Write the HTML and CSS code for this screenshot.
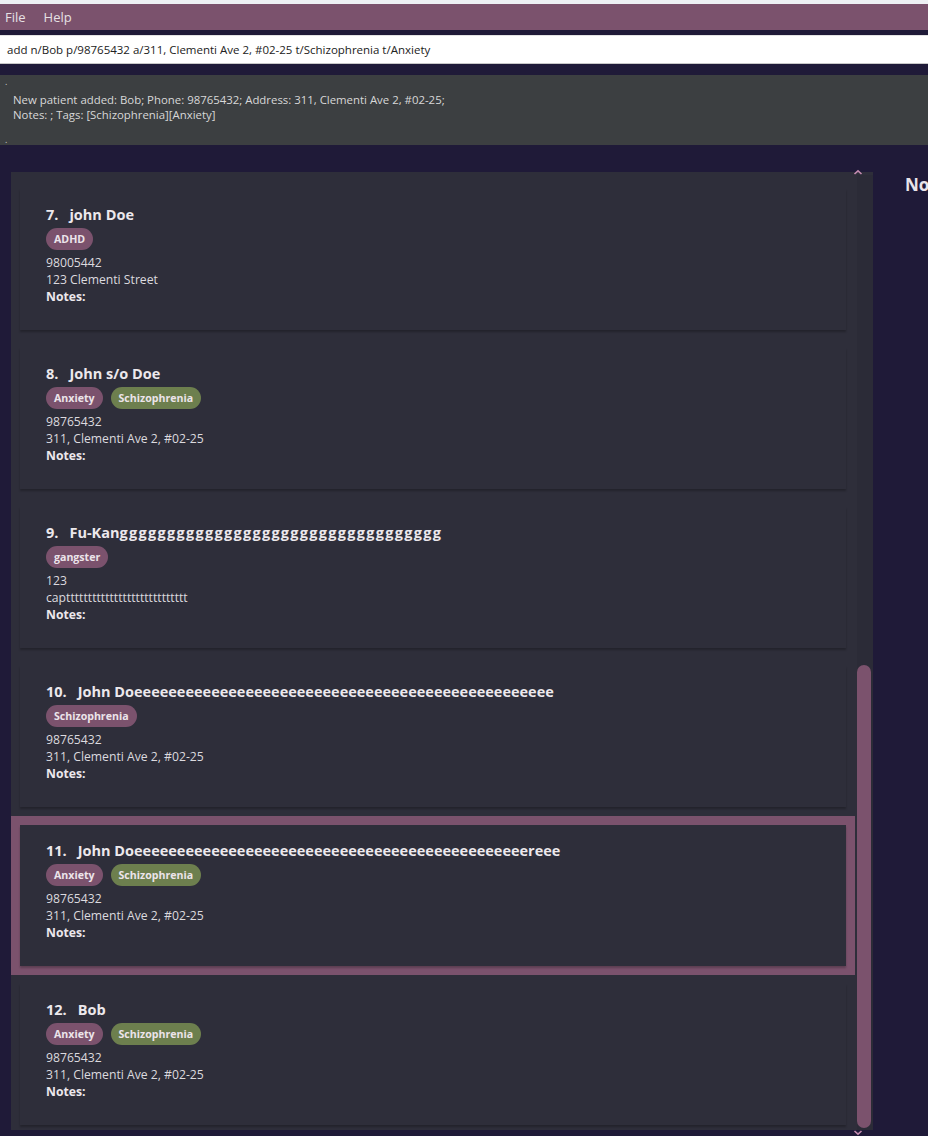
FILE: index.html
```html
<!DOCTYPE html>
<html>
<head>
<meta charset="utf-8">
<link rel="stylesheet" href="styles.css">
</head>
<body>
<div class="top-strip"></div>
<div class="menubar"><span class="menu-item">File</span><span class="menu-item">Help</span></div>
<div class="command-wrap">
  <div class="command">add n/Bob p/98765432 a/311, Clementi Ave 2, #02-25 t/Schizophrenia t/Anxiety</div>
</div>
<div class="result">
  <div class="dot">.</div>
  <div class="result-text">New patient added: Bob; Phone: 98765432; Address: 311, Clementi Ave 2, #02-25;<br>Notes: ; Tags: [Schizophrenia][Anxiety]</div>
  <div class="dot">.</div>
</div>
<div class="main">
  <div class="list-panel">
    <div class="list">
      <div class="cell">
        <div class="card">
          <div class="name"><span class="idx">7.</span>john Doe</div>
          <div class="tags"><span class="tag">ADHD</span></div>
          <div class="line">98005442</div>
          <div class="line">123 Clementi Street</div>
          <div class="line notes">Notes:</div>
        </div>
      </div>
      <div class="cell">
        <div class="card">
          <div class="name"><span class="idx">8.</span>John s/o Doe</div>
          <div class="tags"><span class="tag">Anxiety</span><span class="tag green">Schizophrenia</span></div>
          <div class="line">98765432</div>
          <div class="line">311, Clementi Ave 2, #02-25</div>
          <div class="line notes">Notes:</div>
        </div>
      </div>
      <div class="cell">
        <div class="card">
          <div class="name"><span class="idx">9.</span>Fu-Kan<span class="wide">gggggggggggggggggggggggggggggggggg</span></div>
          <div class="tags"><span class="tag">gangster</span></div>
          <div class="line">123</div>
          <div class="line">captttttttttttttttttttttttttttt</div>
          <div class="line notes">Notes:</div>
        </div>
      </div>
      <div class="cell">
        <div class="card">
          <div class="name"><span class="idx">10.</span>John Doeeeeeeeeeeeeeeeeeeeeeeeeeeeeeeeeeeeeeeeeeeeeeeeee</div>
          <div class="tags"><span class="tag">Schizophrenia</span></div>
          <div class="line">98765432</div>
          <div class="line">311, Clementi Ave 2, #02-25</div>
          <div class="line notes">Notes:</div>
        </div>
      </div>
      <div class="cell selected">
        <div class="card">
          <div class="name"><span class="idx">11.</span>John Doeeeeeeeeeeeeeeeeeeeeeeeeeeeeeeeeeeeeeeeeeeeeeereee</div>
          <div class="tags"><span class="tag">Anxiety</span><span class="tag green">Schizophrenia</span></div>
          <div class="line">98765432</div>
          <div class="line">311, Clementi Ave 2, #02-25</div>
          <div class="line notes">Notes:</div>
        </div>
      </div>
      <div class="cell">
        <div class="card">
          <div class="name"><span class="idx">12.</span>Bob</div>
          <div class="tags"><span class="tag">Anxiety</span><span class="tag green">Schizophrenia</span></div>
          <div class="line">98765432</div>
          <div class="line">311, Clementi Ave 2, #02-25</div>
          <div class="line notes">Notes:</div>
        </div>
      </div>
    </div>
    <div class="scrollbar">
      <div class="thumb"></div>
    </div>
  </div>
  <svg class="arrow up" width="10" height="6" viewBox="0 0 10 6"><path d="M1.5 5 L5 1.8 L8.5 5" fill="none" stroke="#c48bb0" stroke-width="1.6"/></svg>
  <svg class="arrow down" width="10" height="6" viewBox="0 0 10 6"><path d="M1.5 1 L5 4.2 L8.5 1" fill="none" stroke="#c48bb0" stroke-width="1.6"/></svg>
  <div class="notes-panel"><div class="notes-title">Notes</div></div>
</div>
</body>
</html>
```
FILE: styles.css
```css
html, body {
  margin: 0;
  padding: 0;
  width: 928px;
  height: 1136px;
  overflow: hidden;
  background: #1f1a38;
  font-family: "Open Sans", "Noto Sans", sans-serif;
}
.top-strip {
  height: 4px;
  background: #eef0f4;
}
.menubar {
  height: 26px;
  background: #7b526d;
  display: flex;
  align-items: center;
  padding-left: 5px;
  gap: 18px;
}
.menu-item {
  color: #e6e0e4;
  font-size: 13px;
}
.command-wrap {
  padding-top: 5px;
  padding-bottom: 11px;
}
.command {
  height: 27px;
  background: #ffffff;
  border-top: 1px solid #e3e3e3;
  border-bottom: 1px solid #c8c8c8;
  box-sizing: content-box;
  display: flex;
  align-items: center;
  padding-left: 7px;
  font-size: 11.5px;
  color: #222;
}
.result {
  height: 70px;
  background: #3c3f41;
  box-sizing: border-box;
  padding: 3px 0 0 5px;
  color: #d8d8d8;
  font-size: 11.4px;
}
.dot {
  height: 8px;
  line-height: 8px;
  font-size: 9px;
  color: #cfcfcf;
}
.result-text {
  padding: 6px 0 14px 8px;
  line-height: 15px;
}
.main {
  position: relative;
  display: flex;
  margin-top: 27px;
  height: 966px;
}
.list-panel {
  flex: 0 0 862px;
  margin-left: 11px;
  height: 958px;
  background: #2e2e3a;
  display: flex;
  overflow: hidden;
}
.list {
  flex: 0 0 844px;
  padding-top: 8px;
}
.cell {
  height: 159px;
  box-sizing: border-box;
  padding: 9px;
}
.cell.selected {
  background: #7b526d;
}
.card {
  height: 141px;
  box-sizing: border-box;
  background: #2e2e3a;
  box-shadow: 0 2px 2px rgba(0, 0, 0, 0.25);
  padding: 16px 0 0 26px;
  color: #e2e0e4;
}
.name {
  font-size: 14.5px;
  font-weight: 700;
  line-height: 20px;
  color: #ece8ec;
  white-space: nowrap;
}
.idx {
  margin-right: 11px;
}
.wide {
  letter-spacing: 1.3px;
}
.tags {
  display: flex;
  gap: 8px;
  margin-top: 3px;
  margin-bottom: 4px;
}
.tag {
  height: 22px;
  line-height: 22px;
  padding: 0 8px;
  border-radius: 11px;
  background: #7b526d;
  color: #ece4ea;
  font-size: 10.6px;
  font-weight: 700;
}
.tag.green {
  background: #6d7f4e;
}
.line {
  font-size: 12.2px;
  line-height: 17px;
  color: #dcdadf;
}
.line.notes {
  font-weight: 700;
  color: #ece8ec;
}
.scrollbar {
  flex: 0 0 16px;
  margin-left: 2px;
  margin-top: 3px;
  background: #2b2b37;
  position: relative;
}
.thumb {
  position: absolute;
  left: 0;
  top: 490px;
  width: 14px;
  height: 463px;
  border-radius: 7px;
  background: #7b526d;
}
.arrow {
  position: absolute;
}
.arrow.up {
  left: 853px;
  top: -3px;
}
.arrow.down {
  left: 853px;
  top: 958px;
}
.notes-panel {
  flex: 1 1 auto;
  min-width: 0;
  padding-left: 32px;
  padding-top: 1px;
}
.notes-title {
  font-size: 17px;
  font-weight: 700;
  color: #e8e4ea;
  white-space: nowrap;
}
```
